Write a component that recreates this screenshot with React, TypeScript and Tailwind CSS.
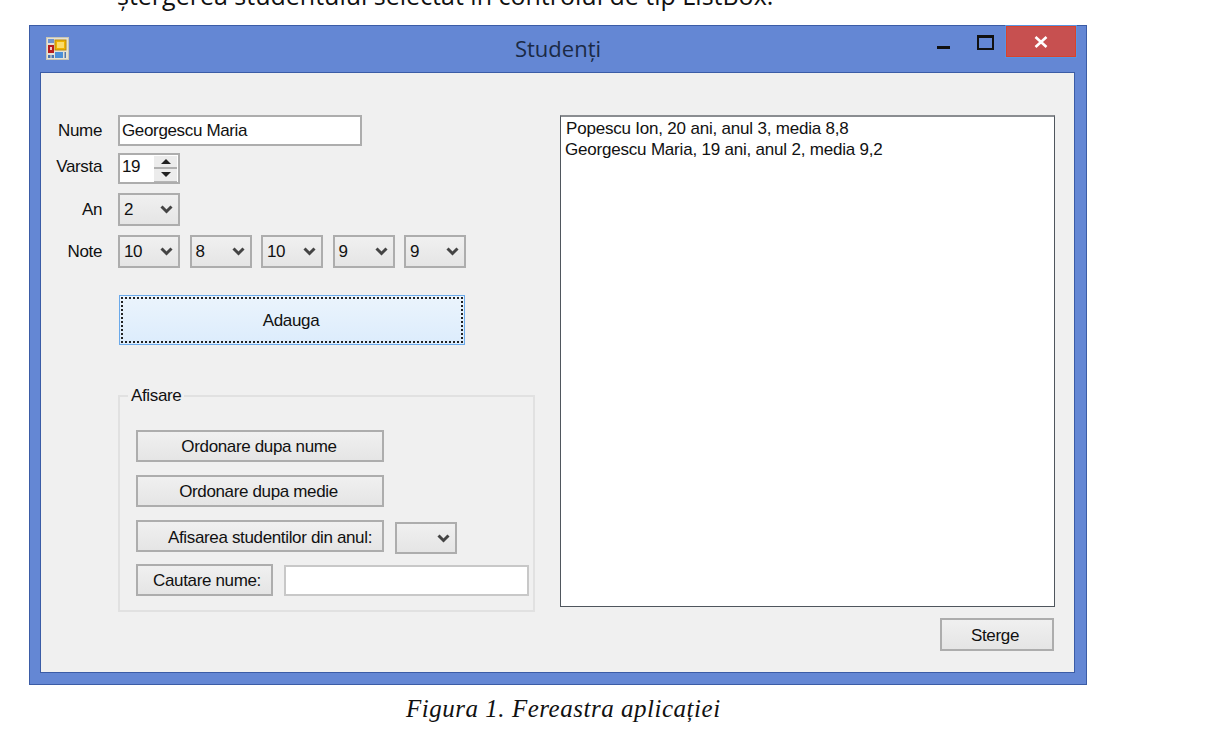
import type { ReactNode } from 'react';

const notes = ['10', '8', '10', '9', '9'];

function Chevron() {
  return (
    <svg width="13" height="9" viewBox="0 0 13 9" fill="none" className="shrink-0">
      <path d="M1.5 1.5 L6.5 6.5 L11.5 1.5" stroke="#444" strokeWidth="3" />
    </svg>
  );
}

function Combo({ value, className }: { value?: string; className: string }) {
  return (
    <div
      className={`flex h-[33px] w-[62px] items-center justify-between border-2 border-[#adadad] bg-gradient-to-b from-[#f0f0f0] to-[#e5e5e5] pl-[4px] pr-[5px] ${className}`}
    >
      <span>{value}</span>
      <Chevron />
    </div>
  );
}

function Btn({ children, className }: { children: ReactNode; className: string }) {
  return (
    <button
      className={`flex h-[32px] items-center justify-center border-2 border-[#adadad] bg-gradient-to-b from-[#f0f0f0] to-[#e5e5e5] pt-[1px] ${className}`}
    >
      {children}
    </button>
  );
}

function Row({
  label,
  labelClass = '',
  children,
  className,
}: {
  label: string;
  labelClass?: string;
  children: ReactNode;
  className: string;
}) {
  return (
    <div className={`flex items-center ${className}`}>
      <span className={`mr-[16px] w-[61px] text-right ${labelClass}`}>{label}</span>
      {children}
    </div>
  );
}

function AppIcon() {
  return (
    <svg width="23" height="23" viewBox="0 0 23 23">
      <rect x="0.5" y="0.5" width="22" height="22" fill="#e4e2d6" stroke="#c9c6b4" />
      <rect x="2" y="2" width="6" height="4" fill="#6f94cf" />
      <rect x="2" y="8" width="6" height="8" fill="#b81c1c" />
      <rect x="4" y="10" width="2" height="3" fill="#f3c4c4" />
      <rect x="9" y="3" width="11" height="10" fill="#f0b400" stroke="#b98a10" />
      <rect x="11" y="5" width="7" height="6" fill="#fbdc6a" />
      <rect x="9" y="15" width="8" height="6" fill="#4b8fd8" />
      <rect x="18.5" y="15" width="1.5" height="6" fill="#5578a8" />
      <rect x="2" y="18" width="2.5" height="3" fill="#4a74b0" />
      <rect x="5.5" y="18" width="2.5" height="3" fill="#4a74b0" />
    </svg>
  );
}

export default function App() {
  return (
    <div className="h-[737px] w-[1207px] overflow-hidden bg-white font-['Liberation_Sans',sans-serif] text-[17px] tracking-[-0.35px] text-[#111]">
      {/* clipped line of the document above the window */}
      <div className="h-[25px] overflow-hidden pl-[117px] font-['Open_Sans',sans-serif] text-[25px] leading-[25px] tracking-normal text-[#111]">
        <p className="mt-[-17px] whitespace-nowrap">
          ștergerea studentului selectat în controlul de tip ListBox.
        </p>
      </div>

      {/* window frame */}
      <div className="ml-[29px] flex h-[660px] w-[1058px] flex-col border border-[#3b5ca6] bg-[#6487d4]">
        <div className="flex h-[46px] items-start">
          <div className="w-[157px] pl-[16px] pt-[11px]">
            <AppIcon />
          </div>
          <div className="flex-1 pt-[6px] text-center font-['Open_Sans',sans-serif] text-[22px] leading-[32px] tracking-normal text-[#1b2a45]">
            Studenți
          </div>
          <div className="flex w-[157px] items-start">
            <div className="ml-[8px] mt-[20px] h-[3px] w-[13px] bg-[#111]" />
            <div className="ml-[27px] mt-[9px] h-[15px] w-[17px] border-2 border-t-[3px] border-[#111]" />
            <div className="ml-[12px] flex h-[31px] w-[70px] items-center justify-center border border-[#d9432c] bg-[#c75050] outline outline-1 outline-[#5a93e0]">
              <svg width="14" height="12" viewBox="0 0 14 12">
                <path d="M1.5 1 L12.5 11 M12.5 1 L1.5 11" stroke="#fff" strokeWidth="2.6" />
              </svg>
            </div>
          </div>
        </div>

        {/* client area */}
        <div className="ml-[10px] flex h-[601px] w-[1035px] border border-[#3b5ca6] bg-[#f0f0f0] pt-[42px]">
          <div className="flex w-[519px] flex-col">
            <Row label="Nume" className="h-[31px]">
              <div className="flex h-[31px] w-[244px] items-center border-2 border-[#adadad] bg-white pl-[2px]">
                Georgescu Maria
              </div>
            </Row>
            <Row label="Varsta" labelClass="mb-[4px]" className="mt-[7px] h-[31px]">
              <div className="flex h-[31px] w-[62px] items-center justify-between border-2 border-[#adadad] bg-white pl-[2px] pr-[1px]">
                <span className="mb-[4px]">19</span>
                <div className="flex h-[26px] w-[23px] flex-col bg-[#ececec]">
                  <div className="flex flex-1 items-center justify-center border-b-2 border-[#b0b0b0]">
                    <div className="h-0 w-0 border-x-[5px] border-b-[5px] border-x-transparent border-b-[#222]" />
                  </div>
                  <div className="flex flex-1 items-center justify-center border-b border-[#b5b5b5]">
                    <div className="h-0 w-0 border-x-[5px] border-t-[5px] border-x-transparent border-t-[#222]" />
                  </div>
                </div>
              </div>
            </Row>
            <Row label="An" className="mt-[9px] h-[33px]">
              <Combo value="2" className="" />
            </Row>
            <Row label="Note" className="mt-[9px] h-[33px]">
              <div className="flex gap-[9.5px]">
                {notes.map((n, i) => (
                  <Combo key={i} value={n} className="" />
                ))}
              </div>
            </Row>

            <button className="ml-[78px] mt-[27px] h-[50px] w-[346px] border border-[#6aa9ea] bg-gradient-to-b from-[#ebf4fc] to-[#dcecfc] p-[1px]">
              <span className="flex h-full w-full items-center justify-center border-2 border-dotted border-[#222] pr-[2px] pt-[2px]">
                Adauga
              </span>
            </button>

            <fieldset className="ml-[77px] mt-[40px] h-[227px] w-[417px] border-2 border-[#e1e1e1] pl-[16px]">
              <legend className="ml-[-8px] px-[3px] pt-[1px] leading-[20px]">Afisare</legend>
              <div className="mt-[24px] flex flex-col">
                <Btn className="w-[248px] pr-[2px]">Ordonare dupa nume</Btn>
                <Btn className="mt-[13px] w-[248px] pr-[3px]">Ordonare dupa medie</Btn>
                <div className="mt-[13px] flex items-start">
                  <Btn className="w-[248px] pl-[20px] !pt-[3px]">Afisarea studentilor din anul:</Btn>
                  <Combo className="ml-[11px] mt-[2px] !h-[32px]" />
                </div>
                <div className="mt-[10px] flex items-center">
                  <Btn className="w-[137px] pl-[5px]">Cautare nume:</Btn>
                  <div className="ml-[11px] h-[31px] w-[245px] border-2 border-[#c8c8c8] bg-white" />
                </div>
              </div>
            </fieldset>
          </div>

          <div className="flex w-[495px] flex-col items-end">
            <div className="h-[492px] w-[495px] border border-t-2 border-[#4f565d] border-t-[#8a8d91] bg-white pl-[5px] pt-[1px] leading-[21px] tracking-[-0.2px]">
              <p>Popescu Ion, 20 ani, anul 3, media 8,8</p>
              <p className="ml-[-1px]">Georgescu Maria, 19 ani, anul 2, media 9,2</p>
            </div>
            <Btn className="mr-[1px] mt-[11px] !h-[33px] w-[114px] pr-[4px] !pt-[2px]">Sterge</Btn>
          </div>
        </div>
      </div>

      <p className="ml-[406px] mt-[9px] font-['Liberation_Serif',serif] text-[25px] italic leading-[30px] tracking-[0.52px] text-[#111]">
        Figura 1. Fereastra aplicației
      </p>
    </div>
  );
}
